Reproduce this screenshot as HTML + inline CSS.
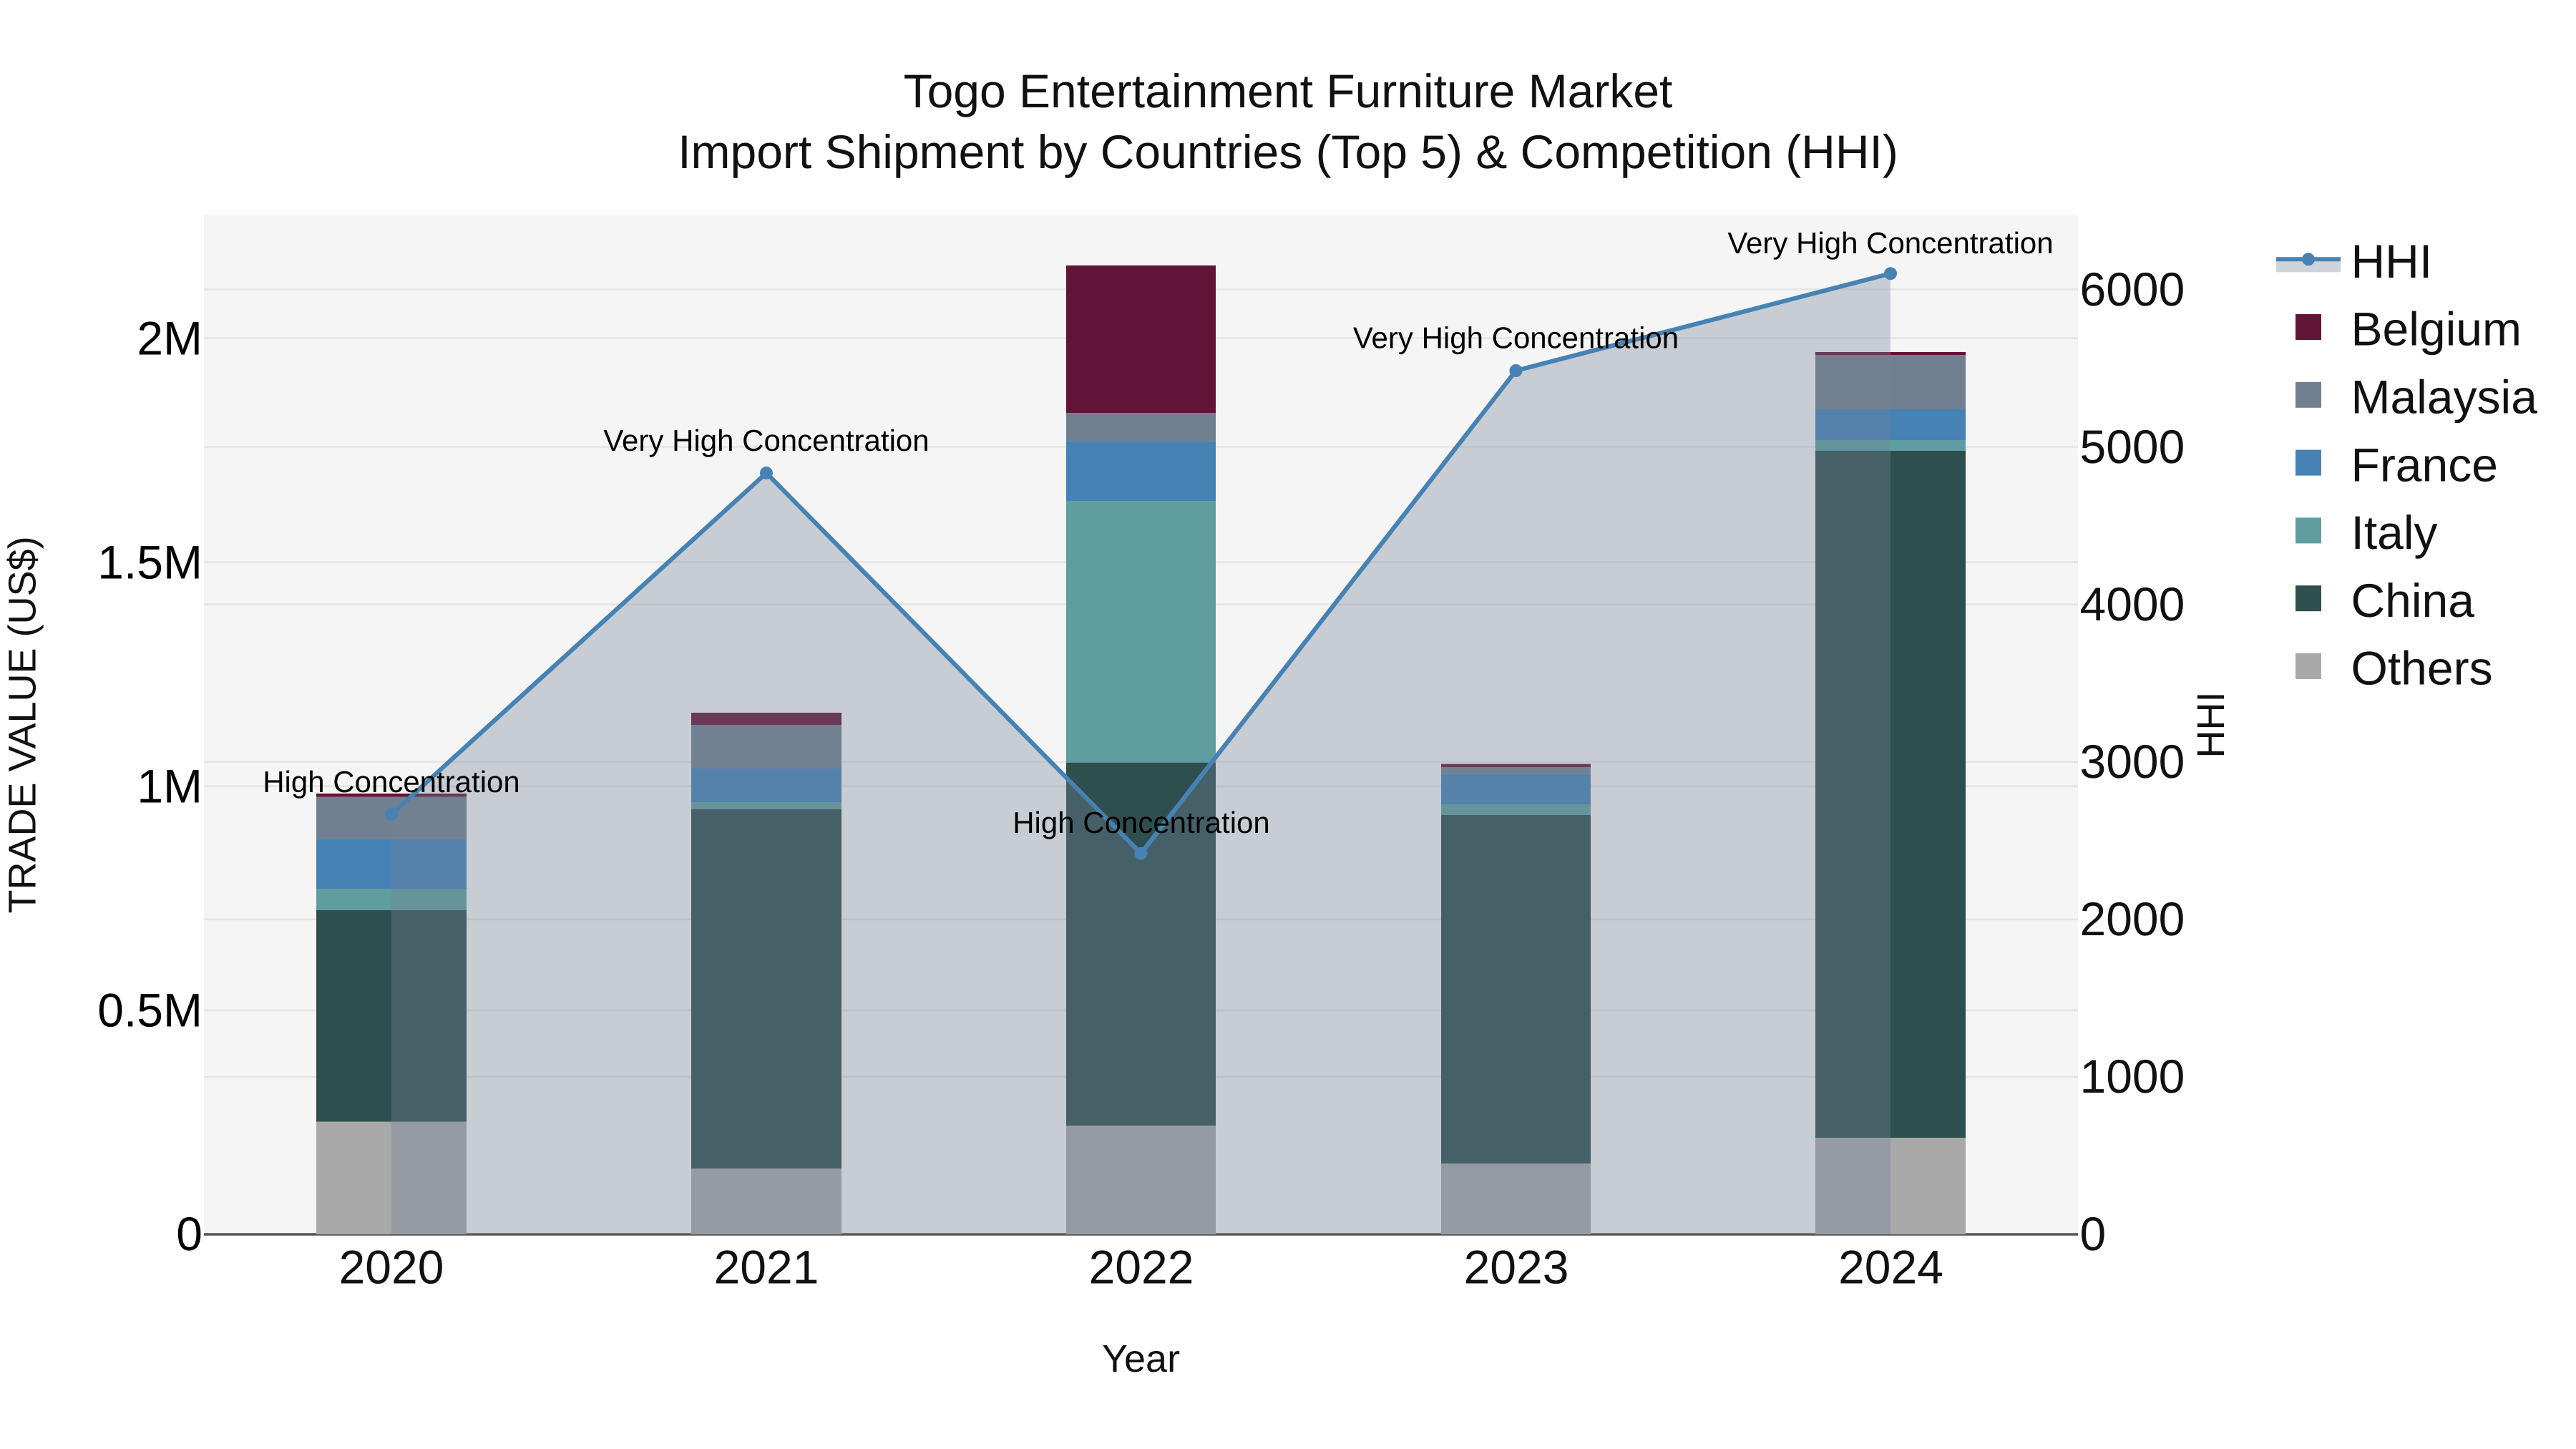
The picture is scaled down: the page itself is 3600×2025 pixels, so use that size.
<!DOCTYPE html>
<html lang="en">
<head>
<meta charset="utf-8">
<title>Togo Entertainment Furniture Market</title>
<style>
html,body{margin:0;padding:0;background:#fff;width:3600px;height:2025px;overflow:hidden}
svg{display:block;position:absolute;left:0;top:0}
text{font-family:"Liberation Sans",Arial,sans-serif;text-rendering:geometricPrecision;fill:#111}
.t{font-size:66px;text-anchor:middle}
.tick{font-size:66px}
.l{text-anchor:end;fill:#000}
.x{text-anchor:middle}
.ax{font-size:54px;text-anchor:middle}
.an{font-size:42px;text-anchor:middle;fill:#000}
.lg{font-size:66px}
</style>
</head>
<body>
<svg width="3600" height="2025" viewBox="0 0 3600 2025" xmlns="http://www.w3.org/2000/svg">
<rect x="0" y="0" width="3600" height="2025" fill="#fff"/>
<rect x="285" y="300" width="2619" height="1425" fill="#f5f5f5"/>
<g stroke="#e5e5e5" stroke-width="2.6" fill="none">
<path d="M285 404.4H2904M285 624.5H2904M285 844.6H2904M285 1064.7H2904M285 1284.8H2904M285 1504.9H2904"/>
<path d="M285 472.6H2904M285 785.7H2904M285 1098.8H2904M285 1411.9H2904"/>
</g>
<path d="M285 1725H2904" stroke="#555" stroke-width="3.4" fill="none"/>

<!-- 2020 -->
<g>
<rect x="442" y="1109" width="210" height="4.7" fill="#621437"/>
<rect x="442" y="1113.7" width="210" height="59" fill="#708090"/>
<rect x="442" y="1172.7" width="210" height="69.3" fill="#4682b4"/>
<rect x="442" y="1242" width="210" height="30" fill="#5f9ea0"/>
<rect x="442" y="1272" width="210" height="295.5" fill="#2f4f4f"/>
<rect x="442" y="1567.5" width="210" height="157.5" fill="#a9a9a9"/>
</g>
<!-- 2021 -->
<g>
<rect x="966" y="996" width="210" height="17" fill="#621437"/>
<rect x="966" y="1013" width="210" height="61" fill="#708090"/>
<rect x="966" y="1074" width="210" height="47" fill="#4682b4"/>
<rect x="966" y="1121" width="210" height="9.7" fill="#5f9ea0"/>
<rect x="966" y="1130.7" width="210" height="502.3" fill="#2f4f4f"/>
<rect x="966" y="1633" width="210" height="92" fill="#a9a9a9"/>
</g>
<!-- 2022 -->
<g>
<rect x="1490" y="371" width="209" height="206" fill="#621437"/>
<rect x="1490" y="577" width="209" height="39.7" fill="#708090"/>
<rect x="1490" y="616.7" width="209" height="83.3" fill="#4682b4"/>
<rect x="1490" y="700" width="209" height="365.7" fill="#5f9ea0"/>
<rect x="1490" y="1065.7" width="209" height="507.3" fill="#2f4f4f"/>
<rect x="1490" y="1573" width="209" height="152" fill="#a9a9a9"/>
</g>
<!-- 2023 -->
<g>
<rect x="2014" y="1067.7" width="209" height="4.3" fill="#621437"/>
<rect x="2014" y="1072" width="209" height="9.7" fill="#708090"/>
<rect x="2014" y="1081.7" width="209" height="42.3" fill="#4682b4"/>
<rect x="2014" y="1124" width="209" height="15" fill="#5f9ea0"/>
<rect x="2014" y="1139" width="209" height="487" fill="#2f4f4f"/>
<rect x="2014" y="1626" width="209" height="99" fill="#a9a9a9"/>
</g>
<!-- 2024 -->
<g>
<rect x="2537" y="492" width="210" height="4" fill="#621437"/>
<rect x="2537" y="496" width="210" height="76" fill="#708090"/>
<rect x="2537" y="572" width="210" height="43" fill="#4682b4"/>
<rect x="2537" y="615" width="210" height="15" fill="#5f9ea0"/>
<rect x="2537" y="630" width="210" height="960" fill="#2f4f4f"/>
<rect x="2537" y="1590" width="210" height="135" fill="#a9a9a9"/>
</g>

<!-- HHI area + line -->
<path d="M547 1138L1071 661L1594.5 1192.7L2118.5 518L2642 382.3V1725H547Z" fill="rgba(115,131,150,.345)"/>
<path d="M547 1138L1071 661L1594.5 1192.7L2118.5 518L2642 382.3" fill="none" stroke="#4682b4" stroke-width="6.2" stroke-linejoin="round"/>
<g fill="#4682b4">
<circle cx="547" cy="1138" r="9"/>
<circle cx="1071" cy="661" r="9"/>
<circle cx="1594.5" cy="1192.7" r="9"/>
<circle cx="2118.5" cy="518" r="9"/>
<circle cx="2642" cy="382.3" r="9"/>
</g>

<!-- annotations -->
<text class="an" x="547" y="1107">High Concentration</text>
<text class="an" x="1071" y="630">Very High Concentration</text>
<text class="an" x="1595" y="1164">High Concentration</text>
<text class="an" x="2118.5" y="486.5">Very High Concentration</text>
<text class="an" x="2642" y="354">Very High Concentration</text>

<!-- title -->
<text class="t" x="1800" y="150">Togo Entertainment Furniture Market</text>
<text class="t" x="1800" y="235">Import Shipment by Countries (Top 5) &amp; Competition (HHI)</text>

<!-- left ticks -->
<text class="tick l" x="283" y="1747">0</text>
<text class="tick l" x="283" y="1434.5">0.5M</text>
<text class="tick l" x="283" y="1121.5">1M</text>
<text class="tick l" x="283" y="808.5">1.5M</text>
<text class="tick l" x="283" y="495.5">2M</text>

<!-- right ticks -->
<text class="tick" x="2906.5" y="1747">0</text>
<text class="tick" x="2906.5" y="1527">1000</text>
<text class="tick" x="2906.5" y="1307">2000</text>
<text class="tick" x="2906.5" y="1087">3000</text>
<text class="tick" x="2906.5" y="867">4000</text>
<text class="tick" x="2906.5" y="647">5000</text>
<text class="tick" x="2906.5" y="427">6000</text>

<!-- x ticks -->
<text class="tick x" x="547" y="1793.5">2020</text>
<text class="tick x" x="1071" y="1793.5">2021</text>
<text class="tick x" x="1595" y="1793.5">2022</text>
<text class="tick x" x="2119" y="1793.5">2023</text>
<text class="tick x" x="2642.5" y="1793.5">2024</text>

<!-- axis titles -->
<text class="ax" x="1594.5" y="1917">Year</text>
<text class="ax" transform="translate(49.5 1013) rotate(-90)">TRADE VALUE (US$)</text>
<text class="ax" transform="translate(3108 1013) rotate(-90)">HHI</text>

<!-- legend -->
<rect x="3181" y="362.3" width="90" height="18" fill="rgba(115,131,150,.345)"/>
<path d="M3181 362.3H3271" stroke="#4682b4" stroke-width="6" fill="none"/>
<circle cx="3226" cy="362.3" r="9" fill="#4682b4"/>
<rect x="3208" y="439" width="36" height="36" fill="#621437"/>
<rect x="3208" y="533.8" width="36" height="36" fill="#708090"/>
<rect x="3208" y="628.6" width="36" height="36" fill="#4682b4"/>
<rect x="3208" y="723.4" width="36" height="36" fill="#5f9ea0"/>
<rect x="3208" y="818.2" width="36" height="36" fill="#2f4f4f"/>
<rect x="3208" y="913" width="36" height="36" fill="#a9a9a9"/>
<text class="lg" x="3285.5" y="388">HHI</text>
<text class="lg" x="3285.5" y="482.7">Belgium</text>
<text class="lg" x="3285.5" y="577.5">Malaysia</text>
<text class="lg" x="3285.5" y="672.3">France</text>
<text class="lg" x="3285.5" y="767.1">Italy</text>
<text class="lg" x="3285.5" y="861.9">China</text>
<text class="lg" x="3285.5" y="956.7">Others</text>
</svg>
</body>
</html>
